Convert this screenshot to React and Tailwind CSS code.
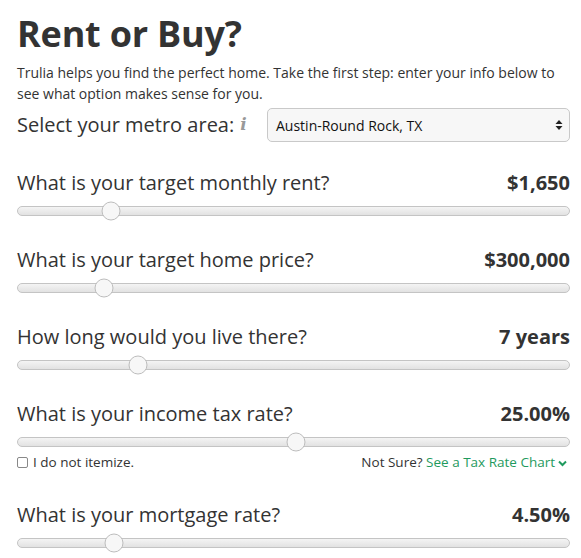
import React from "react";

const rows = [
  { label: "What is your target monthly rent?", value: "$1,650", pos: 93 },
  { label: "What is your target home price?", value: "$300,000", pos: 86 },
  { label: "How long would you live there?", value: "7 years", pos: 120 },
  { label: "What is your income tax rate?", value: "25.00%", pos: 278, tax: true },
  { label: "What is your mortgage rate?", value: "4.50%", pos: 96, more: true },
];

const Slider = ({ pos }) => (
  <div className="relative h-[10px] w-full rounded-full border border-[#c4c4c4] bg-gradient-to-b from-[#f4f4f4] to-[#e2e2e2]">
    <div
      className="absolute top-1/2 h-[19px] w-[19px] -translate-x-1/2 -translate-y-1/2 rounded-full border border-[#bdbdbd] bg-[#f7f7f7]"
      style={{ left: pos }}
    />
  </div>
);

export default function App() {
  return (
    <div className="min-h-screen bg-white pl-[17px] pr-[11px] text-[#333] font-['Open_Sans',sans-serif]">
      <h1 className="pt-[13px] text-[36px] font-bold leading-[42px] tracking-[-0.2px]">Rent or Buy?</h1>
      <p className="mt-[7px] text-[14px] leading-[21px]">
        Trulia helps you find the perfect home. Take the first step: enter your info below to see what option makes sense for you.
      </p>
      <div className="mt-[4px] flex items-center justify-between">
        <div className="flex items-center text-[20px]">
          Select your metro area:
          <span className="ml-[6px] font-['DejaVu_Serif',serif] text-[17px] font-bold italic text-[#999]">i</span>
        </div>
        <div className="flex h-[34px] w-[303px] items-center justify-between rounded-[5px] border border-[#c9c9c9] bg-[#f7f7f7] pl-[8px] pr-[6px] text-[14px] text-[#111]">
          <span>Austin-Round Rock, TX</span>
          <svg width="8" height="12" viewBox="0 0 8 12">
            <path d="M4 1 L7.5 5 H0.5 Z M4 11 L7.5 7 H0.5 Z" fill="#222" />
          </svg>
        </div>
      </div>
      <div className="mt-[27px] flex flex-col">
        {rows.map((r) => (
          <div key={r.label} className="mb-[30px]">
            <div className="flex items-baseline justify-between text-[20px] leading-[28px]">
              <span>{r.label}</span>
              <span className="font-bold">{r.value}</span>
            </div>
            <div className="mt-[9px]">
              <Slider pos={r.pos} />
            </div>
            {r.tax && (
              <div className="mt-[6px] flex items-center justify-between text-[13.5px] leading-[18px]">
                <label className="flex items-center gap-[5px]">
                  <span className="inline-block h-[11px] w-[11px] rounded-[2px] border border-[#888] bg-white" />
                  I do not itemize.
                </label>
                <span className="pr-[3px]">
                  Not Sure? <span className="text-[#1f9a5e]">See a Tax Rate Chart</span>
                  <svg className="ml-[3px] inline-block align-middle" width="9" height="7" viewBox="0 0 9 7">
                    <path d="M1 1.5 L4.5 5 L8 1.5" stroke="#1f9a5e" strokeWidth="2" fill="none" />
                  </svg>
                </span>
              </div>
            )}
            {r.more && (
              <div className="mt-[6px] text-right text-[13.5px] leading-[18px]">
                Not Sure? <span className="text-[#1f9a5e]">Learn More</span>
              </div>
            )}
          </div>
        ))}
      </div>
    </div>
  );
}
